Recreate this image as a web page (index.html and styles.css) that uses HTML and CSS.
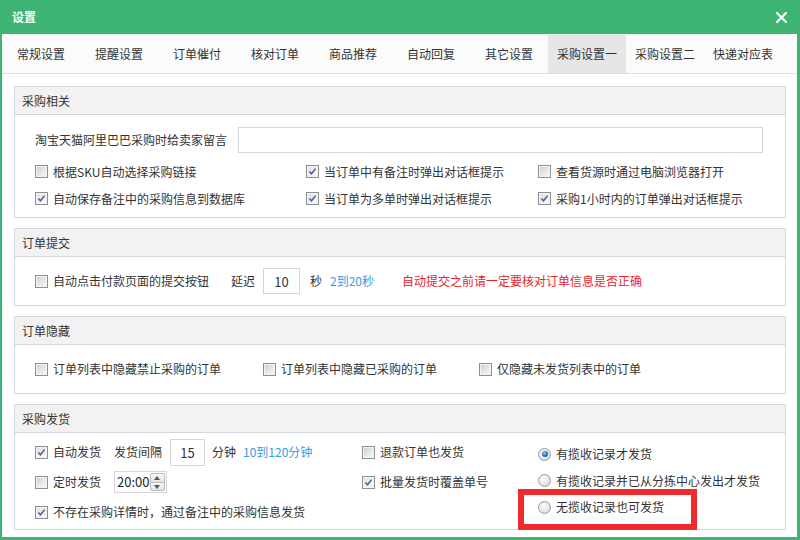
FILE: index.html
```html
<!DOCTYPE html>
<html lang="zh-CN">
<head>
<meta charset="utf-8">
<title>设置</title>
<link rel="stylesheet" href="styles.css">
</head>
<body>
<div class="window">
  <div class="titlebar">
    <span class="title">设置</span>
    <svg class="close" width="11" height="11" viewBox="0 0 11 11"><path d="M1 1 L10 10 M10 1 L1 10" stroke="#fff" stroke-width="2.2" stroke-linecap="square"/></svg>
  </div>
  <div class="main">
    <div class="tabs">
      <div class="tab">常规设置</div>
      <div class="tab">提醒设置</div>
      <div class="tab">订单催付</div>
      <div class="tab">核对订单</div>
      <div class="tab">商品推荐</div>
      <div class="tab">自动回复</div>
      <div class="tab">其它设置</div>
      <div class="tab active">采购设置一</div>
      <div class="tab">采购设置二</div>
      <div class="tab">快递对应表</div>
    </div>
    <div class="content">
      <section class="group">
        <div class="group-head">采购相关</div>
        <div class="group-body body-1">
          <div class="msg-row">
            <span class="msg-label">淘宝天猫阿里巴巴采购时给卖家留言</span>
            <span class="textbox wide"></span>
          </div>
          <div class="grid-3">
            <label class="opt"><span class="cb"></span>根据SKU自动选择采购链接</label>
            <label class="opt"><span class="cb on"><svg viewBox="0 0 11 11"><path d="M2.4 5.4 L4.5 7.8 L8.6 2.6" fill="none" stroke="#4a5d98" stroke-width="1.5"/></svg></span>当订单中有备注时弹出对话框提示</label>
            <label class="opt"><span class="cb"></span>查看货源时通过电脑浏览器打开</label>
            <label class="opt"><span class="cb on"><svg viewBox="0 0 11 11"><path d="M2.4 5.4 L4.5 7.8 L8.6 2.6" fill="none" stroke="#4a5d98" stroke-width="1.5"/></svg></span>自动保存备注中的采购信息到数据库</label>
            <label class="opt"><span class="cb on"><svg viewBox="0 0 11 11"><path d="M2.4 5.4 L4.5 7.8 L8.6 2.6" fill="none" stroke="#4a5d98" stroke-width="1.5"/></svg></span>当订单为多单时弹出对话框提示</label>
            <label class="opt"><span class="cb on"><svg viewBox="0 0 11 11"><path d="M2.4 5.4 L4.5 7.8 L8.6 2.6" fill="none" stroke="#4a5d98" stroke-width="1.5"/></svg></span>采购1小时内的订单弹出对话框提示</label>
          </div>
        </div>
      </section>

      <section class="group">
        <div class="group-head">订单提交</div>
        <div class="group-body body-row">
          <label class="opt"><span class="cb"></span>自动点击付款页面的提交按钮</label>
          <span class="delay-label">延迟</span>
          <span class="textbox num">10</span>
          <span class="unit">秒</span>
          <span class="hint">2到20秒</span>
          <span class="warn">自动提交之前请一定要核对订单信息是否正确</span>
        </div>
      </section>

      <section class="group">
        <div class="group-head">订单隐藏</div>
        <div class="group-body body-row hide-row">
          <label class="opt"><span class="cb"></span>订单列表中隐藏禁止采购的订单</label>
          <label class="opt"><span class="cb"></span>订单列表中隐藏已采购的订单</label>
          <label class="opt"><span class="cb"></span>仅隐藏未发货列表中的订单</label>
        </div>
      </section>

      <section class="group">
        <div class="group-head">采购发货</div>
        <div class="group-body body-4">
          <div class="ship-grid">
            <div class="line">
              <label class="opt"><span class="cb on"><svg viewBox="0 0 11 11"><path d="M2.4 5.4 L4.5 7.8 L8.6 2.6" fill="none" stroke="#4a5d98" stroke-width="1.5"/></svg></span>自动发货</label>
              <span class="gap-label">发货间隔</span>
              <span class="textbox num2">15</span>
              <span class="unit2">分钟</span>
              <span class="hint hint2">10到120分钟</span>
            </div>
            <div class="line">
              <label class="opt"><span class="cb"></span>退款订单也发货</label>
            </div>
            <div class="line">
              <label class="opt"><span class="cb"></span>定时发货</label>
              <span class="timebox"><span class="time-text">20:00</span><span class="spin"><span class="spin-btn up"></span><span class="spin-btn down"></span></span></span>
            </div>
            <div class="line">
              <label class="opt"><span class="cb on"><svg viewBox="0 0 11 11"><path d="M2.4 5.4 L4.5 7.8 L8.6 2.6" fill="none" stroke="#4a5d98" stroke-width="1.5"/></svg></span>批量发货时覆盖单号</label>
            </div>
            <div class="line span2">
              <label class="opt"><span class="cb on"><svg viewBox="0 0 11 11"><path d="M2.4 5.4 L4.5 7.8 L8.6 2.6" fill="none" stroke="#4a5d98" stroke-width="1.5"/></svg></span>不存在采购详情时，通过备注中的采购信息发货</label>
            </div>
          </div>
          <div class="radios">
            <label class="ropt"><span class="rb on"></span>有揽收记录才发货</label>
            <label class="ropt"><span class="rb"></span>有揽收记录并已从分拣中心发出才发货</label>
            <label class="ropt"><span class="rb"></span>无揽收记录也可发货</label>
          </div>
        </div>
      </section>
    </div>
  </div>
  <div class="mark"></div>
</div>
</body>
</html>
```

FILE: styles.css
```css
html, body {
  margin: 0;
  padding: 0;
  background: #fff;
}
body {
  font-family: "Noto Sans CJK SC", "Microsoft YaHei", sans-serif;
  font-size: 12px;
  color: #333;
}
.window {
  position: relative;
  width: 800px;
  height: 540px;
  box-sizing: border-box;
  background: #3db474;
  padding: 0 3px 3px 2px;
  display: flex;
  flex-direction: column;
}
.titlebar {
  height: 34px;
  flex: 0 0 34px;
  display: flex;
  align-items: center;
  justify-content: space-between;
  padding: 0 10px 0 10px;
}
.title {
  color: #fff;
  font-weight: bold;
  font-size: 12px;
  line-height: 14px;
}
.close {
  display: block;
  margin-top: 1px;
}
.main {
  flex: 1;
  background: #fff;
  display: flex;
  flex-direction: column;
  overflow: hidden;
}
.tabs {
  height: 38px;
  padding-top: 1px;
  background: #fbfbfb;
  border-bottom: 1px solid #dedede;
  display: flex;
}
.tab {
  width: 78px;
  height: 38px;
  display: flex;
  align-items: center;
  justify-content: center;
  color: #333;
  line-height: 14px;
}
.tab.active {
  background: #e6e6e6;
}
.content {
  padding: 12px 11px 0 12px;
  display: flex;
  flex-direction: column;
  gap: 10px;
}
.group {
  border: 1px solid #d4d7df;
}
.group-head {
  height: 27px;
  line-height: 27px;
  background: #f2f2f2;
  border-bottom: 1px solid #d4d7df;
  padding-left: 7px;
}
.group-body {
  background: #fff;
}
.body-1 {
  height: 102px;
  box-sizing: border-box;
  padding: 12px 22px 0 20px;
}
.msg-row {
  display: flex;
  align-items: center;
  height: 26px;
}
.msg-label {
  width: 203px;
  line-height: 14px;
}
.textbox {
  box-sizing: border-box;
  border: 1px solid #d6d6d6;
  background: #fff;
  display: inline-flex;
  align-items: center;
  justify-content: center;
  font-size: 13px;
  color: #333;
}
.textbox.wide {
  width: 525px;
  height: 26px;
}
.grid-3 {
  margin-top: 5px;
  display: grid;
  grid-template-columns: 271px 232px auto;
  grid-auto-rows: 27px;
}
.opt {
  display: flex;
  align-items: center;
  line-height: 14px;
  white-space: nowrap;
}
.cb {
  position: relative;
  flex: 0 0 13px;
  width: 13px;
  height: 13px;
  box-sizing: border-box;
  border: 1px solid #8f8f8f;
  background: #f4f4f4;
  margin-right: 5px;
}
.cb::before {
  content: "";
  position: absolute;
  left: 1px;
  top: 1px;
  width: 9px;
  height: 9px;
  background: linear-gradient(135deg, #cfd1d4 0%, #e7e7e7 55%, #f7f7f7 100%);
}
.cb.on::before {
  background: linear-gradient(135deg, #dfe2e8 0%, #eef0f3 60%, #f9f9f9 100%);
}
.cb svg {
  position: absolute;
  left: 0;
  top: 0;
  width: 11px;
  height: 11px;
}
.body-row {
  height: 48px;
  display: flex;
  align-items: center;
  padding-left: 20px;
}
.delay-label {
  margin-left: 22px;
  line-height: 14px;
}
.textbox.num {
  width: 37px;
  height: 26px;
  margin-left: 8px;
}
.unit {
  margin-left: 10px;
  line-height: 14px;
}
.hint {
  color: #3b9be0;
  margin-left: 8px;
  line-height: 14px;
}
.warn {
  color: #e8262a;
  margin-left: 28px;
  line-height: 14px;
}
.hide-row .opt:nth-child(1) {
  width: 228px;
}
.hide-row .opt:nth-child(2) {
  width: 216px;
}
.body-4 {
  height: 96px;
  display: flex;
  padding-left: 20px;
}
.ship-grid {
  width: 503px;
  padding-top: 4px;
  display: grid;
  grid-template-columns: 327px 176px;
  grid-auto-rows: 30px;
}
.line {
  display: flex;
  align-items: center;
}
.span2 {
  grid-column: 1 / span 2;
}
.gap-label {
  margin-left: 13px;
  line-height: 14px;
}
.textbox.num2 {
  width: 35px;
  height: 27px;
  margin-left: 8px;
}
.unit2 {
  margin-left: 7px;
  line-height: 14px;
}
.hint2 {
  margin-left: 7px;
}
.timebox {
  margin-left: 13px;
  width: 53px;
  height: 22px;
  box-sizing: border-box;
  border: 1px solid #d6d6d6;
  display: flex;
  align-items: center;
  justify-content: space-between;
  padding: 1px 1px 1px 2px;
}
.time-text {
  font-size: 13px;
  line-height: 14px;
  color: #222;
}
.spin {
  display: flex;
  flex-direction: column;
  width: 15px;
  height: 18px;
}
.spin-btn {
  position: relative;
  flex: 1;
  box-sizing: border-box;
  border: 1px solid #bcbcbc;
  background: linear-gradient(#f7f7f7, #e3e3e3);
}
.spin-btn.up {
  border-bottom: none;
  border-radius: 2px 2px 0 0;
}
.spin-btn.down {
  border-radius: 0 0 2px 2px;
}
.spin-btn::after {
  content: "";
  position: absolute;
  left: 3px;
  width: 0;
  height: 0;
  border-left: 3.5px solid transparent;
  border-right: 3.5px solid transparent;
}
.spin-btn.up::after {
  top: 2px;
  border-bottom: 4px solid #555;
}
.spin-btn.down::after {
  top: 2px;
  border-top: 4px solid #555;
}
.radios {
  padding-top: 8px;
  display: flex;
  flex-direction: column;
}
.ropt {
  height: 26.5px;
  display: flex;
  align-items: center;
  line-height: 14px;
  white-space: nowrap;
}
.rb {
  position: relative;
  width: 13px;
  height: 13px;
  box-sizing: border-box;
  border-radius: 50%;
  border: 1px solid #9a9a9a;
  background: radial-gradient(circle at 40% 35%, #fbfbfb 0%, #e8e8e8 50%, #cfcfcf 100%);
  margin-right: 5px;
}
.rb.on::after {
  content: "";
  position: absolute;
  left: 2.5px;
  top: 2.5px;
  width: 6px;
  height: 6px;
  border-radius: 50%;
  background: radial-gradient(circle at 40% 35%, #8ed0ff 0%, #2a7fd0 45%, #123f80 100%);
}
.mark {
  position: absolute;
  left: 518px;
  top: 489px;
  width: 179px;
  height: 41px;
  box-sizing: border-box;
  border: 6px solid #ef2b2f;
  pointer-events: none;
}
```
